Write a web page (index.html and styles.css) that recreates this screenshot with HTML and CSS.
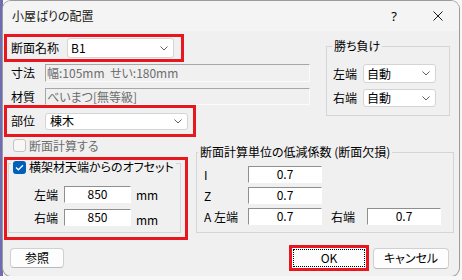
FILE: index.html
```html
<!DOCTYPE html>
<html lang="ja">
<head>
    <meta charset="UTF-8">
    <title>小屋ばりの配置</title>
    <link rel="stylesheet" href="styles.css">
</head>
<body>
<div class="dialog">
    <div class="titlebar">
        <span class="title">小屋ばりの配置</span>
        <span class="cap-btn help">?</span>
        <span class="cap-btn close">
            <svg width="10" height="10" viewBox="0 0 10 10"><path d="M0.5 0.5L9.5 9.5M9.5 0.5L0.5 9.5" stroke="#1b1b1b" stroke-width="1"/></svg>
        </span>
    </div>
    <div class="content">
        <div class="row-top">
            <div class="col-main">
                <div class="mark mark-name">
                    <span class="label w56">断面名称</span>
                    <div class="combo combo-name">
                        <span>B1</span>
                        <svg class="chev" width="8" height="5" viewBox="0 0 8 5"><path d="M0.5 0.5L4 4L7.5 0.5" fill="none" stroke="#606060"/></svg>
                    </div>
                </div>
                <div class="field-row">
                    <span class="label w34">寸法</span>
                    <div class="readonly">幅:105mm  せい:180mm</div>
                </div>
                <div class="field-row row-mat">
                    <span class="label w34">材質</span>
                    <div class="readonly">べいまつ[無等級]</div>
                </div>
                <div class="mark mark-part">
                    <span class="label w34">部位</span>
                    <div class="combo combo-part">
                        <span>棟木</span>
                        <svg class="chev" width="8" height="5" viewBox="0 0 8 5"><path d="M0.5 0.5L4 4L7.5 0.5" fill="none" stroke="#606060"/></svg>
                    </div>
                </div>
            </div>
            <div class="group group-win">
                <div class="group-title">勝ち負け</div>
                <div class="g-row">
                    <span class="label w30">左端</span>
                    <div class="combo combo-win">
                        <span>自動</span>
                        <svg class="chev" width="8" height="5" viewBox="0 0 8 5"><path d="M0.5 0.5L4 4L7.5 0.5" fill="none" stroke="#606060"/></svg>
                    </div>
                </div>
                <div class="g-row second">
                    <span class="label w30">右端</span>
                    <div class="combo combo-win">
                        <span>自動</span>
                        <svg class="chev" width="8" height="5" viewBox="0 0 8 5"><path d="M0.5 0.5L4 4L7.5 0.5" fill="none" stroke="#606060"/></svg>
                    </div>
                </div>
            </div>
        </div>

        <div class="row-mid">
            <div class="col-left">
                <div class="check-row disabled">
                    <span class="checkbox"></span>断面計算する
                </div>
                <div class="mark mark-offset">
                    <div class="group group-offset">
                        <div class="group-title">
                            <span class="checkbox checked">
                                <svg width="9" height="7" viewBox="0 0 9 7"><path d="M1 3.5L3.4 5.8L8 1.2" fill="none" stroke="#fff" stroke-width="1.3"/></svg>
                            </span>横架材天端からのオフセット
                        </div>
                        <div class="o-row">
                            <span class="label w30">左端</span>
                            <div class="edit w67">850</div>
                            <span class="unit">mm</span>
                        </div>
                        <div class="o-row second">
                            <span class="label w30">右端</span>
                            <div class="edit w67">850</div>
                            <span class="unit low">mm</span>
                        </div>
                    </div>
                </div>
            </div>
            <div class="group group-coef">
                <div class="group-title">断面計算単位の低減係数 (断面欠損)</div>
                <div class="c-row first">
                    <span class="label w44">I</span>
                    <div class="edit w74">0.7</div>
                </div>
                <div class="c-row">
                    <span class="label w44">Z</span>
                    <div class="edit w74">0.7</div>
                </div>
                <div class="c-row">
                    <span class="label w44">A 左端</span>
                    <div class="edit w74">0.7</div>
                    <span class="label w36 right-label">右端</span>
                    <div class="edit w74">0.7</div>
                </div>
            </div>
        </div>

        <div class="footer">
            <button class="btn btn-ref">参照</button>
            <button class="btn btn-ok"><span class="focus">OK</span></button>
            <button class="btn btn-cancel">キャンセル</button>
        </div>
    </div>
</div>
</body>
</html>
```

FILE: styles.css
```css
body {
    margin: 0;
    font-family: "Noto Sans CJK JP", sans-serif;
    font-size: 12px;
    line-height: 14px;
    font-feature-settings: "palt";
    color: #000;
    background: linear-gradient(#6f6cb2, #6f6cb2) left top / 3px 100% no-repeat, #f7f7f7;
}
.dialog {
    margin: 1px 0 0 3px;
    width: 456px;
    height: 275px;
    background: #f0f0f0;
    border-radius: 8px;
    box-shadow: 0 0 0 1px #9b9b9b;
    overflow: hidden;
}
.titlebar {
    height: 30px;
    display: flex;
    align-items: center;
    padding-left: 9px;
    background: #f4f4f4;
}
.title {
    flex: 1;
    color: #1b1b1b;
}
.cap-btn {
    display: flex;
    justify-content: center;
    align-items: center;
}
.help {
    width: 46px;
    font-family: "Noto Sans", sans-serif;
    font-size: 13px;
}
.close {
    width: 42px;
}
.content {
    padding-left: 1px;
}
.label {
    flex: none;
}
.w30 { width: 30px; }
.w34 { width: 34px; }
.w36 { width: 36px; }
.w44 { width: 44px; }
.w56 { width: 56px; }
.w67 { width: 67px; }
.w74 { width: 74px; }

/* red highlight frames */
.mark {
    border: 3px solid #e8161e;
    box-sizing: border-box;
    display: flex;
    align-items: center;
}
.mark-name {
    margin-top: 3px;
    width: 180px;
    height: 28px;
    padding-left: 4px;
}
.mark-part {
    width: 192px;
    height: 32px;
    padding-left: 4px;
}
.mark-offset {
    margin-top: 4px;
    width: 184px;
    height: 83px;
    align-items: flex-start;
}

.combo {
    display: flex;
    align-items: center;
    justify-content: space-between;
    background: #fff;
    border: 1px solid #d4d4d4;
    border-radius: 3px;
    box-sizing: border-box;
    padding: 0 5px 0 3px;
}
.combo-name { width: 107px; height: 20px; }
.combo-part { width: 143px; height: 17px; padding-left: 4px; }
.combo-win { width: 73px; height: 19px; }

.row-top {
    display: flex;
    align-items: flex-start;
}
.col-main {
    width: 306px;
}
.field-row {
    display: flex;
    align-items: center;
    padding-left: 7px;
    height: 18px;
    margin-top: 2px;
}
.row-mat {
    margin-top: 6px;
    height: 17px;
}
.readonly {
    width: 265px;
    height: 100%;
    box-sizing: border-box;
    border: 1px solid;
    border-color: #a7a7a7 #fbfbfb #fbfbfb #a7a7a7;
    color: #6d6d6d;
    padding-left: 1px;
    white-space: pre;
    display: flex;
    align-items: center;
}

/* group boxes */
.group {
    border: 1px solid #d5d5d5;
    box-sizing: border-box;
}
.group-title {
    width: max-content;
    margin: -8px 0 0 5px;
    padding: 0 2px;
    background: #f0f0f0;
    display: flex;
    align-items: center;
}
.group-win {
    margin: 15px 0 0 16px;
    width: 124px;
    height: 70px;
}
.g-row {
    display: flex;
    align-items: center;
    padding-left: 6px;
    margin-top: 11px;
}
.g-row.second {
    margin-top: 6px;
}
.g-row.second .combo {
    height: 18px;
}

.row-mid {
    display: flex;
    align-items: flex-start;
}
.col-left {
    width: 188px;
}
.check-row {
    display: flex;
    align-items: center;
    margin-top: 1px;
    height: 15px;
    padding-left: 9px;
}
.disabled {
    color: #6d6d6d;
}
.checkbox {
    flex: none;
    width: 13px;
    height: 13px;
    box-sizing: border-box;
    border: 1px solid #c4c4c4;
    border-radius: 3px;
    background: #f7f7f7;
    margin-right: 3px;
    display: flex;
    align-items: center;
    justify-content: center;
}
.checkbox.checked {
    border: none;
    background: #005fb8;
}
.group-offset {
    margin: 3px 0 0 1px;
    width: 173px;
    height: 70px;
}
.group-offset .group-title {
    margin: -4px 0 0 2px;
}
.o-row {
    display: flex;
    align-items: center;
    padding-left: 25px;
    margin-top: 12px;
}
.o-row.second {
    margin-top: 5px;
}
.unit {
    margin-left: 5px;
}
.unit.low {
    padding-top: 5px;
}
.edit {
    height: 17px;
    box-sizing: border-box;
    background: #fff;
    border: 1px solid;
    border-color: #8f8f8f #fff #fff #8f8f8f;
    text-align: center;
    line-height: 14px;
}
.group-coef {
    margin: 15px 0 0 4px;
    width: 258px;
    height: 81px;
}
.group-coef .group-title {
    margin-left: 1px;
}
.c-row {
    display: flex;
    align-items: center;
    padding-left: 7px;
    margin-top: 4px;
}
.c-row.first {
    margin-top: 7px;
}
.right-label {
    margin-left: 9px;
}

/* buttons */
.footer {
    display: flex;
    align-items: center;
    height: 26px;
    margin-top: 5px;
    padding-right: 10px;
}
.btn {
    font: inherit;
    font-feature-settings: "palt";
    color: #000;
    background: #fdfdfd;
    border: 1px solid #d0d0d0;
    border-bottom-color: #b9b9b9;
    border-radius: 4px;
    padding: 0;
    box-sizing: border-box;
}
.btn-ref {
    margin-left: 6px;
    width: 54px;
    height: 20px;
}
.btn-ok {
    margin-left: auto;
    width: 80px;
    height: 26px;
    border: 3px solid #e8161e;
    border-radius: 0;
    padding: 1px;
}
.focus {
    display: flex;
    align-items: center;
    justify-content: center;
    height: 100%;
    box-sizing: border-box;
    border: 1px dotted #000;
}
.btn-cancel {
    margin-left: 4px;
    width: 76px;
    height: 21px;
}
```
